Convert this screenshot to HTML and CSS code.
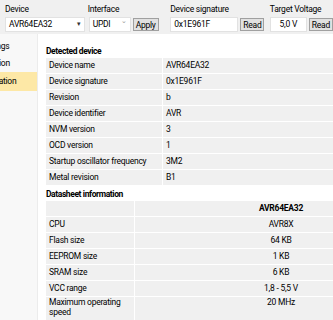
FILE: index.html
```html
<!DOCTYPE html>
<html lang="en">
<head>
    <meta charset="UTF-8">
    <title>Device information</title>
    <link rel="stylesheet" href="styles.css">
</head>
<body>
    <div class="toolbar">
        <div class="tool tool-device">
            <label>Device</label>
            <div class="combo combo-device">AVR64EA32<span class="arrow">&#9662;</span></div>
        </div>
        <div class="tool tool-interface">
            <label>Interface</label>
            <div class="row">
                <div class="combo combo-iface">UPDI<span class="arrow light">&#8964;</span></div>
                <button class="btn">Apply</button>
            </div>
        </div>
        <div class="tool tool-sig">
            <label>Device signature</label>
            <div class="row">
                <div class="textbox tb-sig">0x1E961F</div>
                <button class="btn">Read</button>
            </div>
        </div>
        <div class="tool tool-volt">
            <label>Target Voltage</label>
            <div class="row">
                <div class="textbox tb-volt">5,0 V</div>
                <button class="btn">Read</button>
            </div>
        </div>
    </div>

    <div class="main">
        <div class="sidebar">
            <div class="nav-item"><span class="cut">Fuse settings</span></div>
            <div class="nav-item"><span class="cut cut2">Production</span></div>
            <div class="nav-item active"><span class="cut cut3">Information</span></div>
        </div>

        <div class="content">
            <h3>Detected device</h3>
            <table class="info">
                <tr><td class="key">Device name</td><td>AVR64EA32</td></tr>
                <tr><td class="key">Device signature</td><td>0x1E961F</td></tr>
                <tr><td class="key">Revision</td><td>b</td></tr>
                <tr><td class="key">Device identifier</td><td>AVR</td></tr>
                <tr><td class="key">NVM version</td><td>3</td></tr>
                <tr><td class="key">OCD version</td><td>1</td></tr>
                <tr><td class="key">Startup oscillator frequency</td><td>3M2</td></tr>
                <tr><td class="key">Metal revision</td><td>B1</td></tr>
            </table>

            <h3 class="second">Datasheet information</h3>
            <table class="sheet">
                <tr><td class="key"></td><td class="head">AVR64EA32</td></tr>
                <tr><td class="key">CPU</td><td>AVR8X</td></tr>
                <tr><td class="key">Flash size</td><td>64 KB</td></tr>
                <tr><td class="key">EEPROM size</td><td>1 KB</td></tr>
                <tr><td class="key">SRAM size</td><td>6 KB</td></tr>
                <tr><td class="key">VCC range</td><td>1,8 - 5,5 V</td></tr>
                <tr><td class="key wrap">Maximum operating speed</td><td class="last">20 MHz</td></tr>
            </table>
        </div>
    </div>
</body>
</html>
```

FILE: styles.css
```css
body {
    margin: 0;
    width: 333px;
    height: 320px;
    overflow: hidden;
    font-family: Roboto, "Open Sans", sans-serif;
    font-size: 8.5px;
    letter-spacing: -0.25px;
    color: #000;
    background: #fff;
}
.toolbar {
    display: flex;
    height: 34px;
    background: #f0f0f0;
    padding: 0 0 0 5px;
    box-sizing: border-box;
}
.tool label {
    display: block;
    height: 12px;
    line-height: 12px;
    margin-top: 3px;
    margin-bottom: 2px;
}
.tool-device { width: 83px; }
.tool-interface { width: 83px; }
.tool-sig { width: 100px; }
.row {
    display: flex;
    gap: 2px;
}
.combo, .textbox {
    height: 13px;
    line-height: 13px;
    background: #fff;
    border: 1px solid #e2e2e2;
    padding: 0 3px;
    position: relative;
    box-sizing: content-box;
}
.combo-device { width: 72px; }
.combo-iface { width: 34px; margin-left: 1px; }
.arrow {
    position: absolute;
    right: 3px;
    top: 0;
    font-size: 7px;
    color: #333;
}
.arrow.light {
    color: #999;
    top: -3px;
}
.tb-sig { width: 60px; }
.tb-volt { width: 29px; text-align: center; }
.btn {
    height: 13px;
    padding: 0 2px;
    margin-top: 1px;
    font: inherit;
    letter-spacing: inherit;
    line-height: 10px;
    background: #e1e1e1;
    border: 1px solid #a0a0a0;
    color: #000;
}
.main {
    display: flex;
    height: 286px;
}
.sidebar {
    width: 37px;
    background: #f8f8f8;
    border-right: 1px solid #ececec;
    padding-top: 4px;
    overflow: hidden;
}
.nav-item {
    height: 16px;
    line-height: 16px;
    white-space: nowrap;
    padding-bottom: 1px;
}
.nav-item.active {
    background: #fde8a6;
    height: 18px;
    line-height: 18px;
}
.cut { display: inline-block; margin-left: -38px; }
.cut2 { margin-left: -29px; }
.cut3 { margin-left: -25px; }
.content {
    flex: 1;
    padding: 12px 0 0 8px;
    overflow: hidden;
}
h3 {
    margin: 0;
    font-size: 8.5px;
    font-weight: 700;
    letter-spacing: -0.4px;
    line-height: 11px;
}
h3.second {
    margin-top: 3px;
}
table {
    border-collapse: separate;
    border-spacing: 0 1px;
}
td {
    background: #f0f0f0;
    height: 15px;
    padding: 0 3px;
    line-height: 15px;
    white-space: nowrap;
}
.info { width: 400px; }
.info .key { width: 110px; border-right: 1px solid #fff; }
.sheet { width: 381px; }
.sheet .key { width: 82px; border-right: 1px solid #fff; }
.sheet .wrap {
    white-space: normal;
    line-height: 10px;
    padding-top: 0;
    padding-bottom: 3px;
    vertical-align: top;
}
.sheet td:last-child { text-align: center; }
.sheet td.last { vertical-align: top; line-height: 11px; }
.sheet .head { font-weight: 700; }
```
